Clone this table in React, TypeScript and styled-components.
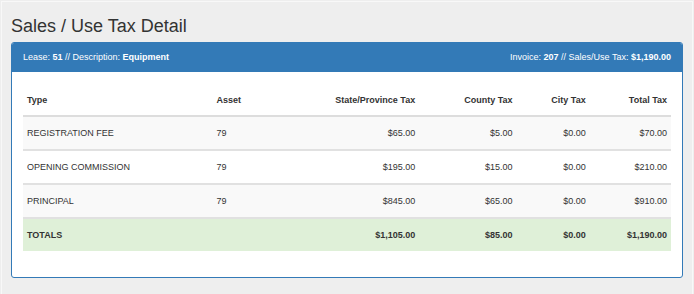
import React from "react";
import styled, { createGlobalStyle } from "styled-components";

const GlobalStyle = createGlobalStyle`
  html, body {
    margin: 0;
    padding: 0;
    background: #eeeeee;
    font-family: "Liberation Sans", Arial, Helvetica, sans-serif;
    color: #333333;
  }
`;

const Page = styled.div`
  box-sizing: border-box;
  margin: 1px 1px 0;
  height: 293px;
  border: 1px solid #f8f8f8;
  border-bottom: none;
  padding: 14px 9px 0;
`;

const Title = styled.h1`
  margin: 0 0 6px;
  font-size: 18px;
  line-height: 20px;
  font-weight: normal;
  color: #333333;
`;

const Panel = styled.section`
  border: 1px solid #337ab7;
  border-radius: 3px;
  background: #ffffff;
  overflow: hidden;
`;

const PanelHeading = styled.header`
  display: flex;
  justify-content: space-between;
  align-items: center;
  padding: 7px 11px;
  height: 14px;
  line-height: 14px;
  font-size: 9px;
  color: #ffffff;
  background: #337ab7;
  border-bottom: 1px solid #337ab7;
`;

const PanelBody = styled.div`
  padding: 10px 11px 0;
`;

const Table = styled.table`
  width: 100%;
  table-layout: fixed;
  border-collapse: collapse;
  margin-bottom: 26px;
  font-size: 9px;
  line-height: 14px;

  tbody > tr + tr > td {
    border-top: 2px solid #e1e1e1;
  }
`;

type CellProps = { $align?: "left" | "right" };

const Th = styled.th<CellProps>`
  padding: 11px 4px 8px;
  text-align: ${({ $align }) => $align ?? "left"};
  vertical-align: bottom;
  font-weight: bold;
  border-bottom: 2px solid #dddddd;
  white-space: nowrap;
`;

const Row = styled.tr<{ $variant?: "striped" | "plain" | "total" }>`
  background: ${({ $variant }) =>
    $variant === "striped" ? "#f9f9f9" : $variant === "total" ? "#dff0d8" : "#ffffff"};
  font-weight: ${({ $variant }) => ($variant === "total" ? "bold" : "normal")};
`;

const Td = styled.td<CellProps>`
  padding: 9px 4px;
  text-align: ${({ $align }) => $align ?? "left"};
  white-space: nowrap;
`;

type Line = {
  type: string;
  asset: string;
  state: string;
  county: string;
  city: string;
  total: string;
};

const lines: Line[] = [
  { type: "REGISTRATION FEE", asset: "79", state: "$65.00", county: "$5.00", city: "$0.00", total: "$70.00" },
  { type: "OPENING COMMISSION", asset: "79", state: "$195.00", county: "$15.00", city: "$0.00", total: "$210.00" },
  { type: "PRINCIPAL", asset: "79", state: "$845.00", county: "$65.00", city: "$0.00", total: "$910.00" },
];

export default function App() {
  return (
    <>
      <GlobalStyle />
      <Page>
        <Title>Sales / Use Tax Detail</Title>
        <Panel>
          <PanelHeading>
            <span>
              Lease: <b>51</b> // Description: <b>Equipment</b>
            </span>
            <span>
              Invoice: <b>207</b> // Sales/Use Tax: <b>$1,190.00</b>
            </span>
          </PanelHeading>
          <PanelBody>
            <Table>
              <colgroup>
                <col style={{ width: 189 }} />
                <col style={{ width: 90 }} />
                <col style={{ width: 116 }} />
                <col style={{ width: 97 }} />
                <col style={{ width: 73 }} />
                <col style={{ width: 81 }} />
              </colgroup>
              <thead>
                <tr>
                  <Th>Type</Th>
                  <Th>Asset</Th>
                  <Th $align="right">State/Province Tax</Th>
                  <Th $align="right">County Tax</Th>
                  <Th $align="right">City Tax</Th>
                  <Th $align="right">Total Tax</Th>
                </tr>
              </thead>
              <tbody>
                {lines.map((line, i) => (
                  <Row key={line.type} $variant={i % 2 === 0 ? "striped" : "plain"}>
                    <Td>{line.type}</Td>
                    <Td>{line.asset}</Td>
                    <Td $align="right">{line.state}</Td>
                    <Td $align="right">{line.county}</Td>
                    <Td $align="right">{line.city}</Td>
                    <Td $align="right">{line.total}</Td>
                  </Row>
                ))}
                <Row $variant="total">
                  <Td>TOTALS</Td>
                  <Td />
                  <Td $align="right">$1,105.00</Td>
                  <Td $align="right">$85.00</Td>
                  <Td $align="right">$0.00</Td>
                  <Td $align="right">$1,190.00</Td>
                </Row>
              </tbody>
            </Table>
          </PanelBody>
        </Panel>
      </Page>
    </>
  );
}
